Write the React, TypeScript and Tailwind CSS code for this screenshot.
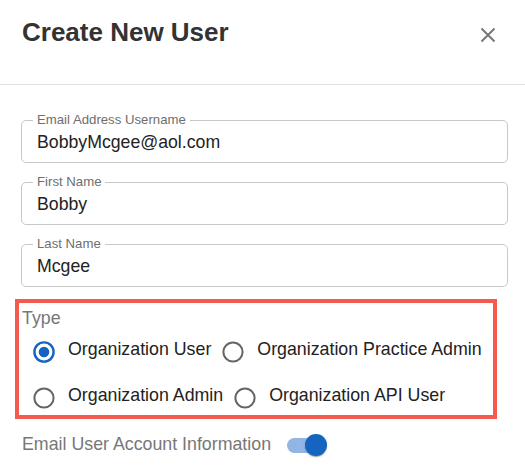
import React from 'react';

const FONT = { fontFamily: '"Liberation Sans", Arial, Helvetica, sans-serif' };

const Field: React.FC<{ label: string; value: string }> = ({ label, value }) => (
  <div className="relative h-[43px] rounded-[5px] border border-[#c8c8c8] flex items-center px-[15px]">
    <span className="absolute left-[11px] -top-[9px] bg-white px-[4px] text-[13.2px] leading-[16px] text-[#6e6e6e]">
      {label}
    </span>
    <span className="text-[17.7px] leading-[20px] text-[#222222]">{value}</span>
  </div>
);

const RadioIcon: React.FC<{ checked?: boolean }> = ({ checked }) => (
  <svg width="24" height="24" viewBox="0 0 24 24">
    <circle cx="12" cy="12" r="9.6" fill="none" stroke={checked ? '#1565c0' : '#666666'} strokeWidth={checked ? 2.4 : 2} />
    {checked && <circle cx="12" cy="12" r="5.3" fill="#1565c0" />}
  </svg>
);

const RadioItem: React.FC<{ label: string; checked?: boolean }> = ({ label, checked }) => (
  <label className="flex items-center mr-[1px]">
    <span className="w-[42px] h-[42px] flex items-center justify-center">
      <RadioIcon checked={checked} />
    </span>
    <span className="ml-[3px] mb-[7px] text-[17.8px] leading-[20px] text-[#222222] whitespace-nowrap">{label}</span>
  </label>
);

const App: React.FC = () => {
  return (
    <div className="w-[525px] h-[472px] bg-white overflow-hidden" style={FONT}>
      {/* Header */}
      <div className="h-[85px] border-b border-[#e0e0e0] flex items-start justify-between">
        <h1 className="pl-[22px] pt-[17px] text-[26px] leading-[30px] font-bold text-[#333333]">Create New User</h1>
        <button className="mt-[27px] mr-[29px] w-[16px] h-[16px]">
          <svg width="16" height="16" viewBox="0 0 16 16">
            <path d="M1.5 1.5 L14.5 14.5 M14.5 1.5 L1.5 14.5" stroke="#757575" strokeWidth="1.9" strokeLinecap="butt" />
          </svg>
        </button>
      </div>

      {/* Fields */}
      <div className="pt-[35px] pl-[21px] pr-[17px] flex flex-col gap-[19px]">
        <Field label="Email Address Username" value="BobbyMcgee@aol.com" />
        <Field label="First Name" value="Bobby" />
        <Field label="Last Name" value="Mcgee" />
      </div>

      {/* Type (highlighted) */}
      <div className="mt-[12px] ml-[15px] w-[482px] h-[120px] border-4 border-[#f45a4e] pl-[3px] pt-[5px]">
        <div className="text-[17.8px] leading-[20px] text-[#777777]">Type</div>
        <div className="mt-[3px] ml-[1px] flex items-center h-[42px]">
          <RadioItem label="Organization User" checked />
          <RadioItem label="Organization Practice Admin" />
        </div>
        <div className="mt-[4px] ml-[1px] flex items-center h-[42px]">
          <RadioItem label="Organization Admin" />
          <RadioItem label="Organization API User" />
        </div>
      </div>

      {/* Switch */}
      <div className="mt-[5px] pl-[22px] h-[42px] flex items-center">
        <span className="mb-[2px] text-[17.8px] leading-[20px] text-[#777777]">Email User Account Information</span>
        <span className="relative ml-[16px] w-[37px] h-[15px] rounded-full bg-[#92b5e3]">
          <span className="absolute -right-[3px] top-1/2 -translate-y-1/2 w-[22px] h-[22px] rounded-full bg-[#1565c0] shadow-[0_2px_1px_-1px_rgba(0,0,0,0.2),0_1px_1px_0_rgba(0,0,0,0.14),0_1px_3px_0_rgba(0,0,0,0.12)]" />
        </span>
      </div>
    </div>
  );
};

export default App;
